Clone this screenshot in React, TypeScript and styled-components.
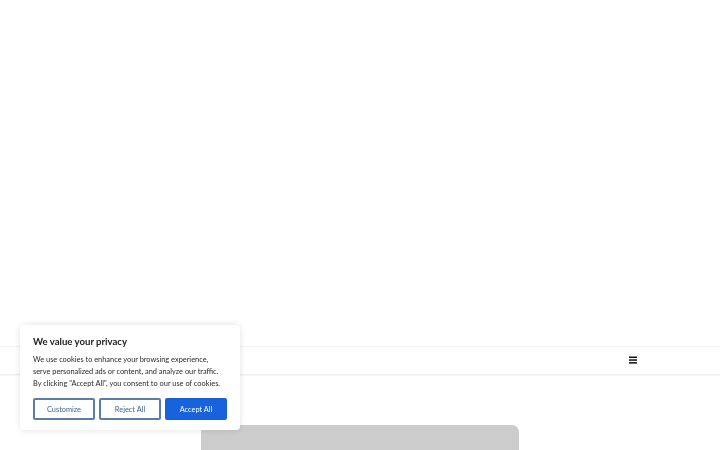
import React from "react";
import styled, { createGlobalStyle } from "styled-components";

const Global = createGlobalStyle`
  html, body { margin: 0; padding: 0; background: #fff; }
  body { font-family: "Lato", "Noto Sans", sans-serif; overflow: hidden; }
  * { box-sizing: border-box; }
`;

const Page = styled.div`
  width: 720px;
  height: 450px;
  display: flex;
  flex-direction: column;
  overflow: hidden;
`;

const Hero = styled.div`
  height: 346px;
  flex: none;
`;

const Header = styled.header`
  height: 28px;
  flex: none;
  border-top: 1px solid #f3f3f3;
  box-shadow: 0 1px 2px rgba(0, 0, 0, 0.1);
  display: flex;
  align-items: center;
  justify-content: flex-end;
  padding-right: 83px;
  padding-bottom: 2px;
`;

const MenuButton = styled.button`
  border: 0;
  background: none;
  padding: 0;
  width: 8px;
  height: 8px;
  display: flex;
  color: #111;
`;

const Content = styled.main`
  padding-top: 51px;
  padding-left: 201px;
`;

const Placeholder = styled.div`
  width: 318px;
  height: 60px;
  background: #cccccc;
  border-radius: 7px 7px 0 0;
`;

const Banner = styled.div`
  position: fixed;
  left: 20px;
  top: 325px;
  width: 220px;
  background: #fff;
  border-radius: 4px;
  box-shadow: 0 0 6px rgba(0, 0, 0, 0.12);
  padding: 10px 13px 10px 13px;
  font-family: "Lato", "Noto Sans", sans-serif;
`;

const Title = styled.h2`
  margin: 0 0 6px;
  font-size: 9.6px;
  font-weight: 700;
  color: #212121;
  line-height: 13px;
`;

const Body = styled.p`
  margin: 0;
  font-size: 7.4px;
  line-height: 12px;
  color: #2a2a2a;
`;

const Buttons = styled.div`
  display: flex;
  gap: 4px;
  margin-top: 8px;
`;

const Btn = styled.button<{ $primary?: boolean }>`
  flex: 1;
  height: 22px;
  border-radius: 2px;
  font-family: inherit;
  font-size: 7.4px;
  padding: 0;
  cursor: pointer;
  border: 2px solid ${(p) => (p.$primary ? "#1863dc" : "#5c7ea6")};
  background: ${(p) => (p.$primary ? "#1863dc" : "#fff")};
  color: ${(p) => (p.$primary ? "#fff" : "#3c639a")};
`;

export default function App() {
  return (
    <>
      <Global />
      <Page>
        <Hero />
        <Header>
          <MenuButton aria-label="Menu">
            <svg width="8" height="8" viewBox="0 0 8 8">
              <rect x="0" y="0.5" width="8" height="1.5" fill="currentColor" />
              <rect x="0" y="3.3" width="8" height="1.5" fill="currentColor" />
              <rect x="0" y="6.1" width="8" height="1.5" fill="currentColor" />
            </svg>
          </MenuButton>
        </Header>
        <Content>
          <Placeholder />
        </Content>
      </Page>
      <Banner>
        <Title>We value your privacy</Title>
        <Body>
          We use cookies to enhance your browsing experience, serve personalized ads or content, and
          analyze our traffic. By clicking "Accept All", you consent to our use of cookies.
        </Body>
        <Buttons>
          <Btn>Customize</Btn>
          <Btn>Reject All</Btn>
          <Btn $primary>Accept All</Btn>
        </Buttons>
      </Banner>
    </>
  );
}
